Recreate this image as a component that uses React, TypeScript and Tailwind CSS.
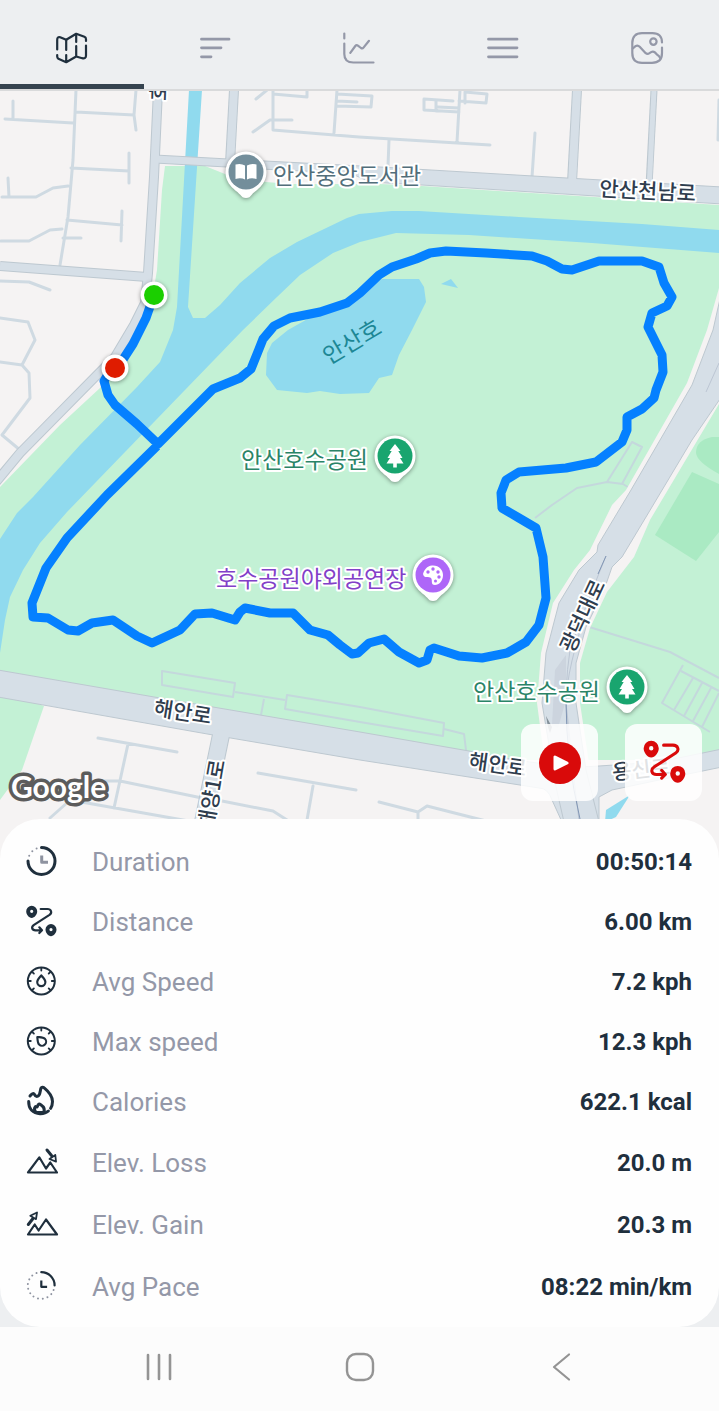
import type { ReactNode } from "react";

type IconProps = {
  className?: string;
};

type Stat = {
  label: string;
  value: string;
  icon: ReactNode;
  tall?: boolean;
};

function Icon({ className, children }: IconProps & { children: ReactNode }) {
  return (
    <svg
      viewBox="0 0 32 32"
      fill="none"
      stroke="currentColor"
      strokeWidth="2.200"
      strokeLinecap="round"
      strokeLinejoin="round"
      aria-hidden="true"
      className={className ?? "size-8 shrink-0 overflow-visible"}
    >
      {children}
    </svg>
  );
}

function MapIcon() {
  return (
    <Icon>
      <path d="M1.2 17.5V8q0-3.6 3-2.8l6 2.6L20.2 1.8l8.200 3q1.600.700 1.600 2.500V9" />
      <path d="M10.200 8V18M20.200 2V10M1.200 23v1.600q0 1.400 1.200 2.200l7.800 3.400 10-5.700 6 1.700q3.800.800 3.800-2.600V13.500M20.200 14V24.500M10.200 23v7" />
    </Icon>
  );
}

function SortIcon() {
  return (
    <Icon>
      <path strokeWidth="2.800" d="M1.500 7.200H29M1.500 15.800H21M1.500 24.800H11" />
    </Icon>
  );
}

function ChartIcon() {
  return (
    <Icon>
      <path d="M1.300 1.500V6.500M1.300 11.500V22q0 8.500 9 8.500H30.500M7.300 20.800L12.300 14q1.200-1.500 2.600-.400L18 16q1.400 1 2.500-.400L26 8.800" />
    </Icon>
  );
}

function MenuIcon() {
  return (
    <Icon>
      <path strokeWidth="2.800" d="M1.500 7.200H30M1.500 15.800H30M1.500 24.800H30" />
    </Icon>
  );
}

function GalleryIcon() {
  return (
    <Icon>
      <path d="M31 10.500Q31 1.200 21.500 1.200H11Q1.300 1.200 1.300 11V21Q1.300 30.800 11 30.800H21Q31 30.800 31 21V15.500" />
      <circle cx="22.400" cy="9.600" r="3.200" />
      <path d="M1.800 16.500L4.500 14.200q2.200-1.600 4.200.600l6 6.400q1.800 1.500 3.800 0l1.600-1.100q2-1.200 3.800.300l2.300 2.300q1.800 1 3 3.200" />
    </Icon>
  );
}

function DurationIcon() {
  return (
    <Icon>
      <path strokeWidth="3" d="M3 15A13.500 13.500 0 1 0 16.500 1.500" />
      <path strokeWidth="2" stroke="#8e93a0" d="M4.200 9.800h.01M7.300 5.300h.01M11.600 2.400h.01" />
      <path strokeWidth="3" stroke="#8e93a0" strokeLinecap="butt" d="M16.700 9.500V16.200H23" />
    </Icon>
  );
}

function RouteIcon({ className }: IconProps) {
  return (
    <Icon className={className}>
      <path d="M15.700 3H22.500C26 3 27.600 6.500 24.500 8.800L9 18.800C5.800 21 7 24.300 10.500 24.300H16.500M14.300 21.300L17 24.300L14.300 27" />
      <path
        fill="currentColor"
        stroke="none"
        fillRule="evenodd"
        d="M6.700-.2a5.500 5.500 0 0 1 5.500 5.500c0 3.200-2.700 6.700-5.500 6.700S1.200 8.500 1.200 5.300A5.500 5.500 0 0 1 6.700-.2Zm0 3.900a1.600 1.600 0 1 0 0 3.200 1.600 1.600 0 0 0 0-3.200ZM26 18.100a5.500 5.500 0 0 1 5.500 5.500c0 3.200-2.700 6.700-5.500 6.700s-5.500-3.500-5.500-6.700a5.500 5.500 0 0 1 5.500-5.500Zm0 3.900a1.600 1.600 0 1 0 0 3.200 1.600 1.600 0 0 0 0-3.200Z"
      />
    </Icon>
  );
}

function SpeedIcon({ needle }: { needle: string }) {
  return (
    <Icon>
      <circle cx="16.300" cy="15" r="13.500" strokeWidth="2" />
      <path
        strokeWidth="1.800"
        d="M16.300 2v2.500M3.300 15h2.500M29.300 15h-2.500M7.300 6l1.600 1.600M25.300 6l-1.600 1.600M7.300 24l1.600-1.600M25.300 24l-1.600-1.600"
      />
      <path
        strokeWidth="2.100"
        transform={needle}
        d="M16.300 9.300C17.500 11 20.400 13.500 20.400 16A4.100 4.100 0 0 1 12.200 16C12.200 13.500 15.100 11 16.300 9.300Z"
      />
    </Icon>
  );
}

function CaloriesIcon() {
  return (
    <Icon>
      <path
        strokeWidth="3"
        d="M5 10C6.500 8 8.500 6.800 9.300 8.300S11 11 12.800 10.200C15.500 9 15 4.500 16 2.200C16.600 1 18.200 1 19.200 1.900C23.500 5.500 27.500 10 27.500 15.500C27.500 18.500 26.800 20.500 25.600 22.300M3.700 15.500C3.500 23 8 27.500 15 27.700C18.500 27.800 21.500 26.800 23.400 25"
      />
      <path
        strokeWidth="3"
        d="M11 26.500C8.800 23.500 9.500 21.500 10.500 20.500C12 21.500 12.500 21 12.800 19.500S14.300 17.600 15.500 18.500C18.500 20.500 20.500 23 18.500 26.500Z"
      />
    </Icon>
  );
}

function ElevLossIcon() {
  return (
    <Icon>
      <path d="M3 25.500L14.300 10.300L21 21.500L25.300 15.500L32 25.500Z" />
      <path strokeWidth="3" d="M22 3L26.500 8.500" />
      <path strokeWidth="1.800" d="M24.500 12L31 14.600L30.300 8Z" />
    </Icon>
  );
}

function ElevGainIcon() {
  return (
    <Icon>
      <path d="M3 25.500L9.700 15.500L13.600 21.500L21 10.500L32 25.500Z" />
      <path strokeWidth="3" d="M3.300 15.500L8 9.500" />
      <path strokeWidth="1.800" d="M5.300 6.800L12 3.500L11 10.200Z" />
    </Icon>
  );
}

function PaceIcon() {
  return (
    <Icon>
      <path d="M16.300 1.200A13.300 13.300 0 0 1 29.600 14.500" />
      <path
        strokeWidth="2"
        stroke="#8e93a0"
        strokeDasharray="0.010 4.800"
        d="M28.600 19A13.300 13.300 0 1 1 13.500 1.500"
      />
      <path strokeLinecap="square" d="M16.300 10.500V15.800H21" />
    </Icon>
  );
}

const tabs = [
  { label: "Map", icon: <MapIcon /> },
  { label: "Splits", icon: <SortIcon /> },
  { label: "Charts", icon: <ChartIcon /> },
  { label: "Details", icon: <MenuIcon /> },
  { label: "Photos", icon: <GalleryIcon /> },
];

const stats: Stat[] = [
  { label: "Duration", value: "00:50:14", icon: <DurationIcon /> },
  { label: "Distance", value: "6.00 km", icon: <RouteIcon /> },
  { label: "Avg Speed", value: "7.2 kph", icon: <SpeedIcon needle="rotate(0)" /> },
  { label: "Max speed", value: "12.3 kph", icon: <SpeedIcon needle="rotate(-45 16.300 15)" /> },
  { label: "Calories", value: "622.1 kcal", icon: <CaloriesIcon /> },
  { label: "Elev. Loss", value: "20.0 m", icon: <ElevLossIcon />, tall: true },
  { label: "Elev. Gain", value: "20.3 m", icon: <ElevGainIcon />, tall: true },
  { label: "Avg Pace", value: "08:22 min/km", icon: <PaceIcon />, tall: true },
];

const ROUTE =
  "M154 295L146 318L133 344L122 361L110 371L104 381L108 395L115 405L137 424L158 444L213 389L240 378L251 369L263 339L274 326L290 318L320 312L347 303L360 293L379 275L392 267L416 259L430 253L446 251L486 253L532 256L547 261L562 269L572 270L599 261L642 261L659 267L664 283L672 297L667 306L652 313L648 327L662 355L663 372L656 390L654 398L642 409L627 417L627 430L622 442L596 462L566 468L519 472L506 480L501 493L502 508L519 518L536 528L543 557L546 598L539 625L526 642L507 653L482 658L459 656L434 648L430 650L427 660L419 663L399 652L384 639L369 643L358 653L352 654L340 645L328 635L310 630L293 613L270 613L245 608L240 612L235 620L212 613L195 614L180 630L152 643L137 636L113 620L92 623L78 631L68 630L48 618L33 617L32 603L46 568L67 538L107 495L157 446";

const STREETS =
  "M76 90L73 160L68 217L60 265M76 112L134 115M136 90L134 115L136 130M5 119L73 123M13 101V118M71 168L129 171M129 153V183M2 197H36L53 188L68 186M8 178L9 197M67 220L122 225M122 211L121 241M1 241H29L50 230L62 229M63 238H81M0 281L29 282L50 290M0 318L28 322L35 340L22 365L0 362M22 365L29 373L30 398L2 435L20 450M256 99L267 90M253 132L270 120H292M273 90V130L359 137L490 145M273 94L307 97V90M337 90L334 133M337 106L371 107L372 96L337 94M337 101L357 102M460 90L457 142M453 101L424 99V110L459 112M436 100V111M438 107L459 108M465 103V92L487 94L486 103L459 101M389 140L388 166M535 133L532 177M719 100L718 140M98 738L177 752M128 744L114 808M100 781H120L202 798M222 801L273 811L287 820M70 800L200 823M68 802L50 818M258 773L356 790M313 786L307 820M379 802L418 812L427 806L490 822M418 812V822";

const PATHS =
  "M535 518L552 505L577 488L607 482L623 484L631 489M607 482L632 442L642 447L622 484M162 671L235 683L233 697L162 685ZM235 692L285 700M264 699L261 715M287 695L360 707L444 723L443 736L360 722L285 709ZM444 729L464 734L466 750M586 626L670 652L719 678M683 665L662 703L710 732M681 671L719 691M693 678L674 710M702 683L684 716M711 688L693 721M719 693L702 727";

function Pin({
  x,
  y,
  color,
  children,
}: {
  x: number;
  y: number;
  color: string;
  children: ReactNode;
}) {
  return (
    <g transform={`translate(${x} ${y})`}>
      <path
        d="M0 26C-3 26-4 25-6 22.500C-10 18-20.500 13-20.500 0A20.500 20.500 0 0 1 20.500 0C20.500 13 10 18 6 22.500C4 25 3 26 0 26Z"
        fill="#fff"
        className="drop-shadow-sm drop-shadow-black/40"
      />
      <circle r="17.500" fill={color} />
      {children}
    </g>
  );
}

function TreeGlyph() {
  return (
    <path
      fill="#fff"
      d="M0-12L5.500-5H3.300L7.500 2H5L8.500 7.500H1.800V11.500H-1.800V7.500H-8.500L-5 2H-7.500L-3.300-5H-5.500Z"
    />
  );
}

function RouteMap() {
  return (
    <svg
      viewBox="0 91 719 768"
      role="img"
      aria-label="Workout route"
      className="block h-auto w-full font-['Noto_Sans_CJK_KR',sans-serif]"
    >
      <rect y="90" width="719" height="770" fill="#f5f3f3" />
      <path
        fill="#c3f1d5"
        d="M165 166H205L240 180L290 184L380 184L422 186L719 205V760H520L0 680V487L60 425L100 388L128 352L148 320L152 300L157 270L162 190ZM0 690L44 706L22 770L0 800Z"
      />
      <g fill="#90daee">
        <path d="M719 230L642 224L519 217L419 211H392L359 214L347 218L297 242L270 258L240 283L220 305L205 318H193L188 307L202 90H189L177 307L173 330L160 362L137 387L80 445L33 497L17 513L0 539V653L5 620L10 597L23 570L40 543L67 512L243 330L277 297L300 275L333 253L360 242L396 233L469 235L592 243L719 253Z" />
        <path d="M382 279L419 279L424 287L426 302L412 330L399 355L392 375L379 378L369 393L340 394L320 391L307 393L277 390L266 375L267 353L272 343L288 330L320 312L350 300Z" />
        <path d="M441 284L451 279L458 288Z" />
      </g>
      <g fill="#aaeac3">
        <path d="M692 472L719 484V532L696 561L655 535Z" />
        <path d="M719 437H712Q696 440 696 453Q697 462 719 474Z" />
      </g>

      <g fill="none" strokeWidth="3" strokeLinejoin="round">
        <path stroke="#cfdae2" strokeLinecap="round" d={STREETS} />
        <path stroke="#c4d8dc" strokeWidth="2" d={PATHS} />
      </g>

      <path
        fill="#f5f3f3"
        d="M719 288L707 330L687 383L626 490L612 505L590 550L574 570L553 603L541 653L537 703L548 787H606L590 770L580 703L580 663L590 628L607 592L634 557L650 520L719 404Z"
      />
      <g fill="none" stroke="#bdc8d0">
        <path strokeWidth="10" d="M158 90L154 177L148 273L145 303L134 325L115 357L98 374L20 453L-4 482" />
        <path strokeWidth="10" d="M0 266L147 277" />
        <path strokeWidth="10" d="M234 90L230 163" />
        <path strokeWidth="10" d="M577 90L572 182" />
        <path strokeWidth="7" d="M654 90L649 186" />
        <path strokeWidth="18" d="M221 735L203 822" />
      </g>
      <g fill="#d6dfe7" stroke="#bdc8d0">
        <path d="M155 155L265 161L380 167L567 178L722 187V204L422 185L370 182L350 173L280 170L155 163Z" />
        <path d="M-2 670L160 698L360 732L469 751Q560 770 599 766L659 762L722 749V767L659 780L612 790L599 797V822H562L552 800Q548 788 539 788L360 760L213 735L-2 697Z" />
        <path d="M722 290L713 330L692 385L631 490L598 545L597 552L579 570L559 603L546 653L542 703L556 787L564 822H599L586 770L576 703V663L586 627L604 590L612 567L622 557L646 517L692 440L722 396Z" />
      </g>
      <g fill="none" stroke="#d6dfe7">
        <path strokeWidth="8" d="M158 90L154 177L148 273L145 303L134 325L115 357L98 374L20 453L-4 482" />
        <path strokeWidth="8" d="M0 266L147 277" />
        <path strokeWidth="8" d="M234 90L230 165" />
        <path strokeWidth="8" d="M577 90L572 184" />
        <path strokeWidth="5" d="M654 90L649 190" />
        <path strokeWidth="16" d="M222 730L203 822" />
        <path strokeWidth="30" d="M560 745L578 800" />
      </g>
      <g fill="none" stroke="#bcc6d3" strokeWidth="1">
        <path d="M719 363L706 392M606 556Q580 620 570 650Q564 690 567 722L579 820M590 600Q566 670 566 703L570 740" />
        <path stroke="#8196b5" d="M606 556L598 574M566 700Q566 760 580 819" />
      </g>
      <path fill="#ccd4de" d="M566 655L555 670L552 725L558 728L566 700Z" />
      <path fill="#85919a" d="M546 716L552 727L550 733L548 727Z" />
      <path fill="#90daee" d="M630 795L606 810L605 822L616 817Z" />

      <path d={ROUTE} fill="none" stroke="#0580ff" strokeWidth="9" strokeLinejoin="round" />

      <g className="drop-shadow-sm drop-shadow-black/40">
        <circle cx="154" cy="295" r="13.500" fill="#fff" />
        <circle cx="115" cy="368" r="13.500" fill="#fff" />
      </g>
      <circle cx="154" cy="295" r="10" fill="#1bcf00" />
      <circle cx="115" cy="368" r="10" fill="#df1c00" />

      <g
        stroke="#fff"
        strokeWidth="4"
        strokeLinejoin="round"
        paintOrder="stroke"
        fontSize="21"
        fontWeight="500"
        fill="#2f3d4e"
      >
        <text transform="translate(166 101) rotate(-88)">호수로</text>
        <text transform="translate(599 196) rotate(3)">안산천남로</text>
        <text transform="translate(153 715) rotate(9)">해안로</text>
        <text transform="translate(468 768) rotate(8)">해안로</text>
        <text transform="translate(225 761) rotate(-80)" textAnchor="end">
          해양1로
        </text>
        <text transform="translate(573 654) rotate(-65)">광덕대로</text>
        <text transform="translate(613 780) rotate(-6)">용신로</text>
        <g fontSize="23" fontWeight="400">
          <text x="273" y="184" fill="#526e7a">안산중앙도서관</text>
          <text x="241" y="468" fill="#2a8467">안산호수공원</text>
          <text x="473" y="700" fill="#2a8467">안산호수공원</text>
          <text x="216" y="587" fill="#8240c8">호수공원야외공연장</text>
          <text transform="translate(329 365) rotate(-31)" fill="#1d8795" stroke="none">
            안산호
          </text>
        </g>
      </g>

      <Pin x={246} y={172} color="#738e9b">
        <path fill="#fff" d="M-10.500-7.500Q-5-9-1-6.500V7.500Q-5 5.500-10.500 7ZM10.500-7.500Q5-9 1-6.500V7.500Q5 5.500 10.500 7Z" />
      </Pin>
      <Pin x={395} y={456} color="#19a56f">
        <TreeGlyph />
      </Pin>
      <Pin x={627} y={687} color="#19a56f">
        <TreeGlyph />
      </Pin>
      <Pin x={433} y={575} color="#ae66f8">
        <path
          fill="#fff"
          d="M-10-1C-9-5-6-9-1-9.500C6-10 10-5 10 0C10 6 6 10 2 10C-3 10 0 5-2 3C-4 1-9 4-10-1Z"
        />
        <g fill="#ae66f8">
          <circle cx="-5" cy="-3" r="1.700" />
          <circle cx="0" cy="-6" r="1.700" />
          <circle cx="5" cy="-3" r="1.700" />
          <circle cx="6" cy="2" r="1.700" />
          <circle cx="2.500" cy="6" r="1.500" />
        </g>
      </Pin>

      <text
        x="11"
        y="798"
        fontSize="30"
        fontWeight="700"
        fill="#fff"
        stroke="#5c5c5c"
        strokeWidth="7"
        strokeLinejoin="round"
        paintOrder="stroke"
        className="font-[Lato,sans-serif]"
      >
        Google
      </text>
    </svg>
  );
}

export default function App() {
  return (
    <div className="flex min-h-screen flex-col bg-[#edeff1] font-[Roboto,sans-serif]">
      <nav className="grid grid-cols-5 border-b-2 border-[#d9dadb]">
        {tabs.map((tab, index) => (
          <button
            key={tab.label}
            type="button"
            aria-label={tab.label}
            className={
              index === 0
                ? "flex justify-center border-b-5 border-[#35434f] pt-8 pb-5 text-[#1f2f3d]"
                : "flex justify-center border-b-5 border-transparent pt-8 pb-5 text-[#9498a8]"
            }
          >
            {tab.icon}
          </button>
        ))}
      </nav>

      <main className="text-[#1f2f3d]">
        <div className="relative">
          <RouteMap />
          <div className="absolute right-[17px] bottom-[58px] flex gap-[27px] text-[#d90a0a]">
            <button
              type="button"
              aria-label="Play route"
              className="flex size-[77px] items-center justify-center rounded-xl bg-white/85"
            >
              <svg viewBox="0 0 42 42" aria-hidden="true" className="size-[42px]">
                <circle cx="21" cy="21" r="21" fill="currentColor" />
                <path
                  d="M16 15V27L28 21Z"
                  fill="#fff"
                  stroke="#fff"
                  strokeWidth="3"
                  strokeLinejoin="round"
                />
              </svg>
            </button>
            <button
              type="button"
              aria-label="Show route"
              className="flex size-[77px] items-center justify-center rounded-xl bg-white/85"
            >
              <RouteIcon className="size-11 overflow-visible" />
            </button>
          </div>
        </div>

        <dl className="relative -mt-10 rounded-[40px] bg-[#fefefe] pt-[13px] pr-[27px] pb-[9px] pl-[25px]">
          {stats.map((stat) => (
            <div
              key={stat.label}
              className={stat.tall ? "flex h-[62px] items-center" : "flex h-[60px] items-center"}
            >
              {stat.icon}
              <dt className="ml-[35px] flex-1 text-[26px] text-[#9498a8]">{stat.label}</dt>
              <dd className="text-2xl font-bold">{stat.value}</dd>
            </div>
          ))}
        </dl>
      </main>

      <div className="grid flex-1 grid-cols-3 items-center bg-[#fcfcfc] px-[58px] pt-6 pb-7 text-[#949494]">
        <button type="button" aria-label="Recent apps" className="flex justify-center">
          <Icon>
            <path strokeWidth="2.600" d="M5 4V28M16 4V28M27 4V28" />
          </Icon>
        </button>
        <button type="button" aria-label="Home" className="flex justify-center">
          <Icon>
            <rect x="3" y="3" width="26" height="26" rx="9" strokeWidth="2.400" />
          </Icon>
        </button>
        <button type="button" aria-label="Back" className="flex justify-center">
          <Icon>
            <path d="M24 3.500L9 16L24 28.500" />
          </Icon>
        </button>
      </div>
    </div>
  );
}
